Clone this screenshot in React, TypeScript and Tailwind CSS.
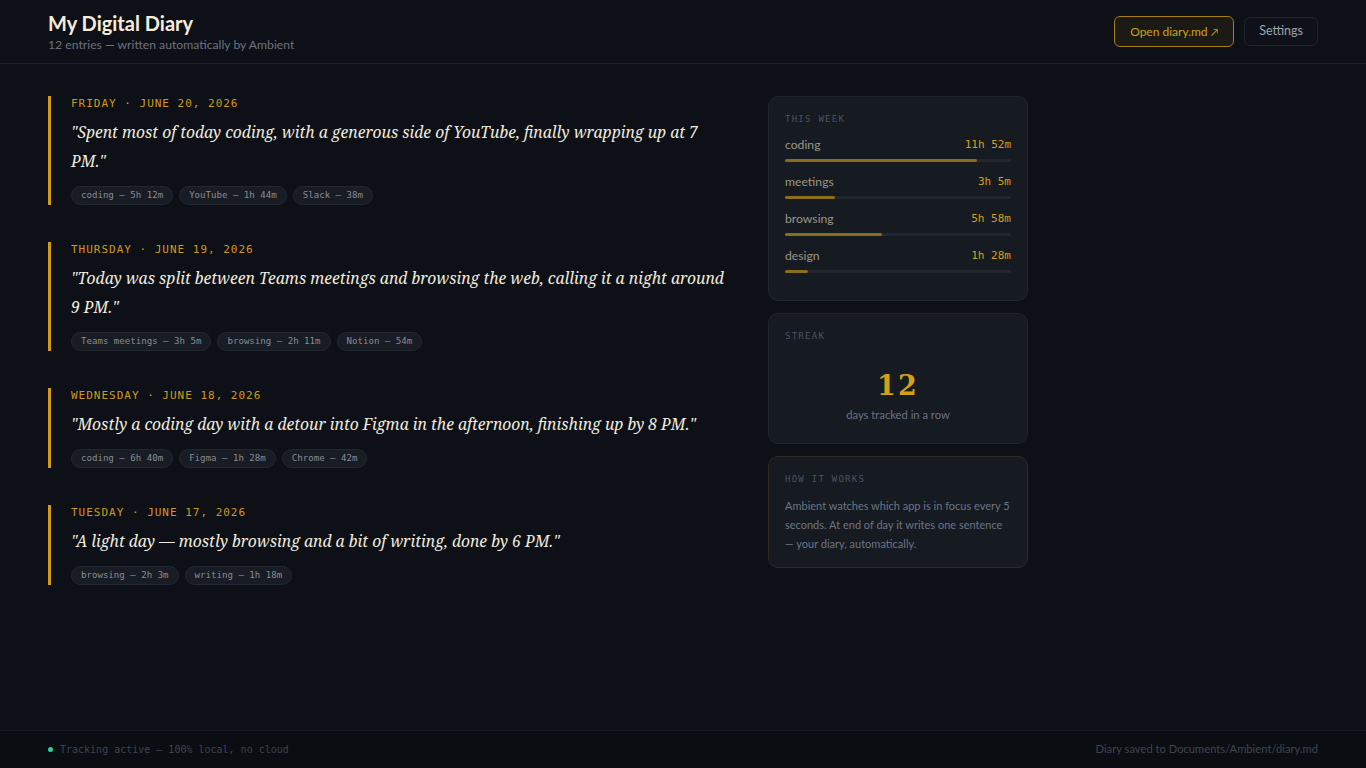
import React from "react";

type Entry = {
  date: string;
  quote: string;
  tags: string[];
};

const entries: Entry[] = [
  {
    date: "FRIDAY · JUNE 20, 2026",
    quote:
      "\"Spent most of today coding, with a generous side of YouTube, finally wrapping up at 7 PM.\"",
    tags: ["coding — 5h 12m", "YouTube — 1h 44m", "Slack — 38m"],
  },
  {
    date: "THURSDAY · JUNE 19, 2026",
    quote:
      "\"Today was split between Teams meetings and browsing the web, calling it a night around 9 PM.\"",
    tags: ["Teams meetings — 3h 5m", "browsing — 2h 11m", "Notion — 54m"],
  },
  {
    date: "WEDNESDAY · JUNE 18, 2026",
    quote:
      "\"Mostly a coding day with a detour into Figma in the afternoon, finishing up by 8 PM.\"",
    tags: ["coding — 6h 40m", "Figma — 1h 28m", "Chrome — 42m"],
  },
  {
    date: "TUESDAY · JUNE 17, 2026",
    quote: "\"A light day — mostly browsing and a bit of writing, done by 6 PM.\"",
    tags: ["browsing — 2h 3m", "writing — 1h 18m"],
  },
];

const week = [
  { label: "coding", value: "11h 52m", pct: 85 },
  { label: "meetings", value: "3h 5m", pct: 22 },
  { label: "browsing", value: "5h 58m", pct: 43 },
  { label: "design", value: "1h 28m", pct: 10 },
];

const sans = "font-['Lato',_'Noto_Sans',_sans-serif]";
const mono = "font-['DejaVu_Sans_Mono',_monospace]";
const serif = "font-['Noto_Serif',_Georgia,_serif]";

function DiaryEntry({ entry }: { entry: Entry }) {
  return (
    <article className="border-l-[3px] border-[#d19b15] pl-5">
      <div
        className={`${mono} text-[11px] leading-[16px] tracking-[0.09em] text-[#d09a17]`}
      >
        {entry.date}
      </div>
      <p
        className={`${serif} mt-[6px] text-[15.7px] italic leading-[29px] text-[#f1ebdf]`}
      >
        {entry.quote}
      </p>
      <div className="mt-[10px] flex flex-wrap gap-[6px]">
        {entry.tags.map((t) => (
          <span
            key={t}
            className={`${mono} h-[19px] rounded-full border border-[#232830] bg-[#181c24] px-[9px] text-[9.1px] leading-[17px] text-[#8a8d93]`}
          >
            {t}
          </span>
        ))}
      </div>
    </article>
  );
}

function CardLabel({ children }: { children: React.ReactNode }) {
  return (
    <div
      className={`${mono} text-[9px] leading-[12px] tracking-[0.14em] text-[#4b5361]`}
    >
      {children}
    </div>
  );
}

export default function App() {
  return (
    <div className={`${sans} flex min-h-screen flex-col bg-[#0d1017]`}>
      <header className="flex h-[64px] items-center justify-between border-b border-[#1c2028] px-12">
        <div className="pt-[1px]">
          <h1 className="text-[20px] font-bold leading-[25px] text-[#f6ecd9]">
            My Digital Diary
          </h1>
          <p className="text-[12.2px] leading-[18px] text-[#6b7280]">
            12 entries — written automatically by Ambient
          </p>
        </div>
        <div className="flex items-center gap-[10px]">
          <button className="h-[31px] rounded-[6px] border border-[#a57f12] bg-[#1b1a15] px-[15px] text-[12px] text-[#d4a017]">
            Open diary.md <span className="text-[10px]">↗</span>
          </button>
          <button className="h-[29px] rounded-[6px] border border-[#20252d] bg-[#0e1218] px-[14px] text-[12.5px] text-[#9ca3af]">
            Settings
          </button>
        </div>
      </header>

      <main className="flex flex-1 gap-10 px-12 pt-8">
        <section className="flex w-[680px] flex-col gap-[37px]">
          {entries.map((e) => (
            <DiaryEntry key={e.date} entry={e} />
          ))}
        </section>

        <aside className="flex w-[260px] flex-col gap-3">
          <div className="rounded-[10px] border border-[#20242c] bg-[#161a21] px-4 pb-[15px] pt-4">
            <CardLabel>THIS WEEK</CardLabel>
            <div className="mt-3">
              {week.map((w) => (
                <div key={w.label} className="mb-3">
                  <div className="flex items-center justify-between">
                    <span className="text-[12.2px] leading-[16px] text-[#9c9783]">
                      {w.label}
                    </span>
                    <span
                      className={`${mono} text-[11px] leading-[16px] text-[#d4a017]`}
                    >
                      {w.value}
                    </span>
                  </div>
                  <div className="mt-[6px] h-[3px] w-full rounded-full bg-[#22262e]">
                    <div
                      className="h-full rounded-full bg-[#8c6d1c]"
                      style={{ width: `${w.pct}%` }}
                    />
                  </div>
                </div>
              ))}
            </div>
          </div>

          <div className="rounded-[10px] border border-[#20242c] bg-[#161a21] px-4 pb-[21px] pt-4">
            <CardLabel>STREAK</CardLabel>
            <div
              className={`font-['DejaVu_Serif',_serif] mt-[26px] text-center text-[27px] font-bold leading-[36px] tracking-[0.08em] text-[#d4a017]`}
            >
              12
            </div>
            <div className="mt-[4px] text-center text-[11.2px] leading-[14px] text-[#6b7382]">
              days tracked in a row
            </div>
          </div>

          <div className="rounded-[10px] border border-[#2e2b20] bg-[#161a21] px-4 pb-[14px] pt-4">
            <CardLabel>HOW IT WORKS</CardLabel>
            <p className="mt-[11px] text-[11px] leading-[19px] text-[#6b7585]">
              Ambient watches which app is in focus every 5 seconds. At end of
              day it writes one sentence — your diary, automatically.
            </p>
          </div>
        </aside>
      </main>

      <footer className="flex h-[38px] items-center justify-between border-t border-[#161a21] bg-[#0a0d12] px-12">
        <div className="flex items-center gap-[7px]">
          <span className="h-[5px] w-[5px] rounded-full bg-[#2dd4a0]" />
          <span className={`${mono} text-[10px] text-[#3c4554]`}>
            Tracking active — 100% local, no cloud
          </span>
        </div>
        <span className="text-[11.2px] text-[#3c4554]">
          Diary saved to Documents/Ambient/diary.md
        </span>
      </footer>
    </div>
  );
}
